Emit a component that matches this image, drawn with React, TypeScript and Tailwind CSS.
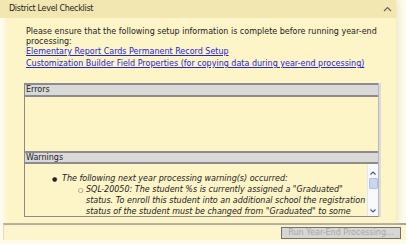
import React from "react";

export default function App() {
  return (
    <div
      className="relative w-[406px] h-[244px] overflow-hidden bg-[#fefbea] text-[#222]"
      style={{ fontFamily: '"DejaVu Sans", Verdana, sans-serif' }}
    >
      <div className="relative w-[396px] h-[223px] bg-[#fdf4c8] shadow-[3px_0_5px_rgba(230,220,180,0.6)] flex flex-col">
        <div className="h-[18px] shrink-0 bg-[#f3e7b1] flex items-center justify-between pl-[9px] pr-[4px] text-[8px] tracking-[-0.3px]">
          <span>District Level Checklist</span>
          <svg width="9" height="6" viewBox="0 0 9 6" className="mt-[-1px]">
            <path d="M1 5 L4.5 1.5 L8 5" fill="none" stroke="#666" strokeWidth="1.2" />
          </svg>
        </div>
        <div className="pl-[26px] pt-[9px] text-[8px] leading-[10px] pr-[8px]">
          <div>Please ensure that the following setup information is complete before running year-end processing:</div>
          <div className="mt-[-1px] text-[#2626d0] underline leading-[12px]">Elementary Report Cards Permanent Record Setup</div>
          <div className="text-[#2626d0] underline leading-[12px]">Customization Builder Field Properties (for copying data during year-end processing)</div>
        </div>
        <div className="ml-[24px] mt-[13px] w-[355px] border-l border-r border-b border-[#8a8a8a] border-r-[#b8b8b8] shadow-[2px_0_0_#dcdcdc] flex flex-col">
          <div className="h-[10px] bg-[#d9d9d9] border-t-2 border-b-2 border-[#8c8c8c] flex items-center text-[8px] pl-[1px] leading-none box-content">Errors</div>
          <div className="h-[54px]" />
          <div className="h-[9px] bg-[#d9d9d9] border-t-2 border-b-2 border-[#8c8c8c] flex items-center text-[8px] pl-[1px] leading-none box-content">Warnings</div>
          <div className="relative h-[52px] overflow-hidden">
            <div className="pr-[9px] italic text-[8px] leading-[11px] pt-[9px]">
              <div className="flex pl-[27px]">
                <span className="w-[10px] shrink-0 not-italic text-[6px]">●</span>
                <span>The following next year processing warning(s) occurred:</span>
              </div>
              <div className="flex pl-[53px]">
                <span className="w-[8px] shrink-0 not-italic text-[6px]">○</span>
                <span>SQL-20050: The student %s is currently assigned a "Graduated" status. To enroll this student into an additional school the registration status of the student must be changed from "Graduated" to some other value first.</span>
              </div>
            </div>
            <div className="absolute right-0 top-0 w-[11px] h-full bg-[#f7f9fd] border-l border-[#e3e7f0] flex flex-col items-center">
              <div className="w-[10px] h-[14px] flex items-end justify-center pb-[3px]">
                <svg width="6" height="4" viewBox="0 0 6 4"><path d="M0.5 3.5 L3 1 L5.5 3.5" fill="none" stroke="#4a5a80" strokeWidth="1.2" /></svg>
              </div>
              <div className="w-[9px] h-[11px] bg-[#c8d6f5] border border-[#aebfe8] rounded-[1px]" />
              <div className="flex-1" />
              <div className="w-[10px] h-[9px] mb-[1px] flex items-center justify-center">
                <svg width="6" height="4" viewBox="0 0 6 4"><path d="M0.5 0.5 L3 3 L5.5 0.5" fill="none" stroke="#4a5a80" strokeWidth="1.2" /></svg>
              </div>
            </div>
          </div>
        </div>
        <div className="absolute left-0 top-[18px] bottom-0 w-[8px] bg-gradient-to-r from-[#fffdf3] to-transparent" />
      </div>
      <div className="h-[17px] ml-[3px] border-t-2 border-l border-[#a9a597] border-l-[#dedcd0] bg-[#fdf5cc] flex justify-end items-start pt-[2px] pr-[5px]">
        <div className="w-[120px] h-[12px] bg-[#d6d6d4] border border-[#707070] text-[8px] text-[#a8a8a8] flex items-center justify-center leading-none">
          Run Year-End Processing...
        </div>
      </div>
    </div>
  );
}
